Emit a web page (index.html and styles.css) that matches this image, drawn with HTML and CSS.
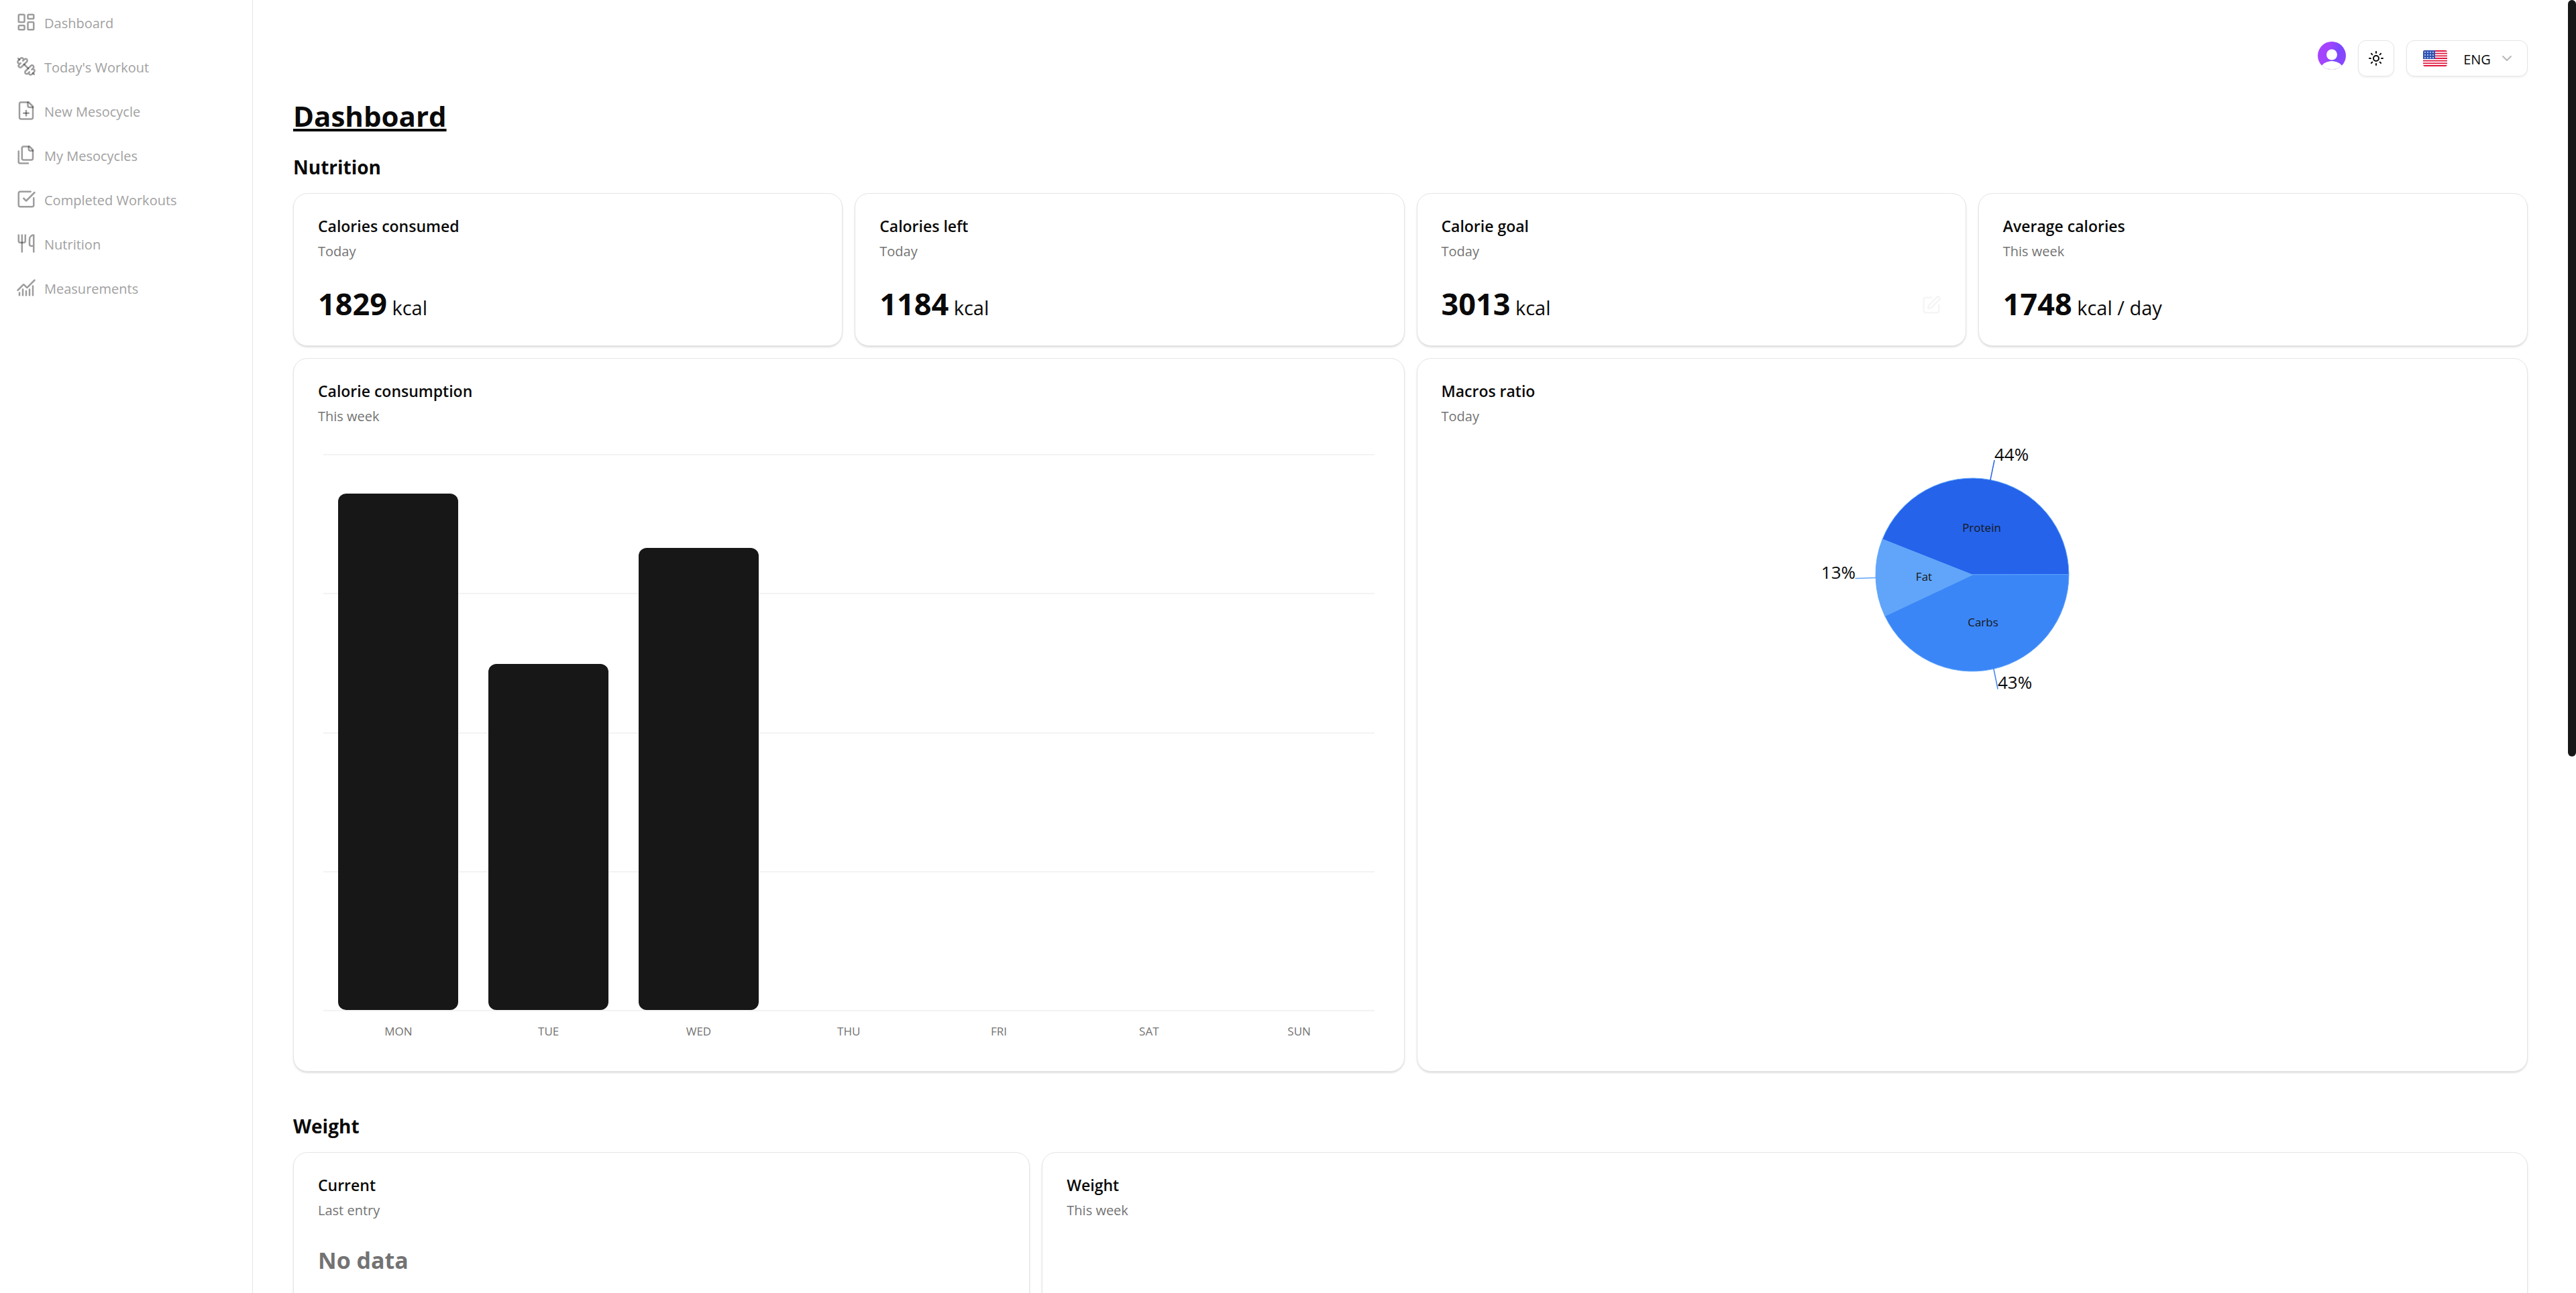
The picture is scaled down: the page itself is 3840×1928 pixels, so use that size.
FILE: index.html
```html
<!DOCTYPE html>
<html lang="en">
<head>
<meta charset="utf-8">
<meta name="viewport" content="width=device-width, initial-scale=1">
<title>Dashboard</title>
<link rel="stylesheet" href="styles.css">
</head>
<body>
<div class="app">
  <aside class="sidebar">
    <nav class="nav">
      <a class="nav-link" href="#dashboard"><svg class="icon" viewBox="0 0 24 24"><rect x="3" y="3" width="7" height="9" rx="1"/><rect x="14" y="3" width="7" height="5" rx="1"/><rect x="14" y="12" width="7" height="9" rx="1"/><rect x="3" y="16" width="7" height="5" rx="1"/></svg><span>Dashboard</span></a>
      <a class="nav-link" href="#today"><svg class="icon" viewBox="0 0 24 24"><path d="M14.4 14.4 9.6 9.6"/><path d="M18.657 21.485a2 2 0 1 1-2.829-2.828l-1.767 1.768a2 2 0 1 1-2.829-2.829l6.364-6.364a2 2 0 1 1 2.829 2.829l-1.768 1.767a2 2 0 1 1 2.828 2.829z"/><path d="m21.5 21.5-1.4-1.4"/><path d="M3.9 3.9 2.5 2.5"/><path d="M6.404 12.768a2 2 0 1 1-2.829-2.829l1.768-1.767a2 2 0 1 1-2.828-2.829l2.828-2.828a2 2 0 1 1 2.829 2.828l1.767-1.768a2 2 0 1 1 2.829 2.829z"/></svg><span>Today's Workout</span></a>
      <a class="nav-link" href="#new"><svg class="icon" viewBox="0 0 24 24"><path d="M15 2H6a2 2 0 0 0-2 2v16a2 2 0 0 0 2 2h12a2 2 0 0 0 2-2V7Z"/><path d="M14 2v4a2 2 0 0 0 2 2h4"/><path d="M9 15h6"/><path d="M12 18v-6"/></svg><span>New Mesocycle</span></a>
      <a class="nav-link" href="#mesocycles"><svg class="icon" viewBox="0 0 24 24"><path d="M20 7h-3a2 2 0 0 1-2-2V2"/><path d="M9 18a2 2 0 0 1-2-2V4a2 2 0 0 1 2-2h7l4 4v10a2 2 0 0 1-2 2Z"/><path d="M3 7.6v12.8A1.6 1.6 0 0 0 4.6 22h9.8"/></svg><span>My Mesocycles</span></a>
      <a class="nav-link" href="#completed"><svg class="icon" viewBox="0 0 24 24"><path d="M21 10.656V19a2 2 0 0 1-2 2H5a2 2 0 0 1-2-2V5a2 2 0 0 1 2-2h12.344"/><path d="m9 11 3 3L22 4"/></svg><span>Completed Workouts</span></a>
      <a class="nav-link" href="#nutrition"><svg class="icon" viewBox="0 0 24 24"><path d="M3 2v7c0 1.1.9 2 2 2h4a2 2 0 0 0 2-2V2"/><path d="M7 2v20"/><path d="M21 15V2a5 5 0 0 0-5 5v6c0 1.1.9 2 2 2h3Zm0 0v7"/></svg><span>Nutrition</span></a>
      <a class="nav-link" href="#measurements"><svg class="icon" viewBox="0 0 24 24"><path d="M12 16v5"/><path d="M16 14v7"/><path d="M20 10v11"/><path d="m22 3-8.646 8.646a.5.5 0 0 1-.708 0L9.354 8.354a.5.5 0 0 0-.707 0L2 15"/><path d="M4 18v3"/><path d="M8 14v7"/></svg><span>Measurements</span></a>
    </nav>
  </aside>

  <main class="main">
    <header class="topbar">
      <button class="avatar" type="button" aria-label="Account">
        <svg viewBox="0 0 42 42">
          <defs>
            <linearGradient id="avatar-fill" x1="0" y1="0" x2="1" y2="0.3"><stop offset="0.4" stop-color="#a544ff"/><stop offset="0.75" stop-color="#7a48ff"/><stop offset="1" stop-color="#8a46ff"/></linearGradient>
            <clipPath id="avatar-clip"><circle cx="21" cy="21" r="21"/></clipPath>
          </defs>
          <g clip-path="url(#avatar-clip)"><rect width="42" height="42" fill="url(#avatar-fill)"/><circle cx="21" cy="19.500" r="8" fill="#fff"/><circle cx="21" cy="49" r="20" fill="#fff"/></g>
          <path d="M14 40.500a21 21 0 0 0 14 0" fill="none" stroke="#e5e5e5"/>
        </svg>
      </button>
      <button class="theme" type="button" aria-label="Toggle theme">
        <svg viewBox="0 0 24 24"><circle cx="12" cy="12" r="4"/><path d="M12 2v2"/><path d="M12 20v2"/><path d="m4.930 4.930 1.410 1.410"/><path d="m17.660 17.660 1.410 1.410"/><path d="M2 12h2"/><path d="M20 12h2"/><path d="m6.340 17.660-1.410 1.410"/><path d="m19.070 4.930-1.410 1.410"/></svg>
      </button>
      <button class="language" type="button" aria-haspopup="listbox">
        <svg class="flag" viewBox="0 0 36 24">
          <defs>
            <clipPath id="flag-clip"><rect width="36" height="24" rx="3"/></clipPath>
            <pattern id="stars" width="4" height="4" patternUnits="userSpaceOnUse" x="1" y="1"><rect x="1" y="1" width="2" height="2" fill="#a9bbe6"/></pattern>
          </defs>
          <g clip-path="url(#flag-clip)">
            <rect width="36" height="24" fill="#fff"/>
            <path d="M0 1h36M0 4.670h36M0 8.340h36M0 12h36M0 15.670h36M0 19.340h36M0 23h36" stroke="#e0143c" stroke-width="1.850"/>
            <rect width="18" height="13" fill="#2e52b2"/><rect x="1" y="1" width="16" height="12" fill="url(#stars)"/>
          </g>
        </svg>
        <span class="language-name">ENG</span>
        <svg class="chevron" viewBox="0 0 24 24"><path d="m6 9 6 6 6-6"/></svg>
      </button>
    </header>

    <h1 class="page-title">Dashboard</h1>

    <section class="section">
      <h2 class="section-title">Nutrition</h2>
      <div class="grid grid-nutrition">
        <article class="card">
          <h3 class="card-title">Calories consumed</h3>
          <p class="card-sub">Today</p>
          <p class="metric"><strong>1829</strong> kcal</p>
        </article>
        <article class="card">
          <h3 class="card-title">Calories left</h3>
          <p class="card-sub">Today</p>
          <p class="metric"><strong>1184</strong> kcal</p>
        </article>
        <article class="card">
          <h3 class="card-title">Calorie goal</h3>
          <p class="card-sub">Today</p>
          <div class="metric-row">
            <p class="metric"><strong>3013</strong> kcal</p>
            <button class="edit" type="button" aria-label="Edit calorie goal"><svg viewBox="0 0 24 24"><path d="M12 3H5a2 2 0 0 0-2 2v14a2 2 0 0 0 2 2h14a2 2 0 0 0 2-2v-7"/><path d="M18.375 2.625a1 1 0 0 1 3 3l-9.013 9.014a2 2 0 0 1-.853.505l-2.873.84a.5.5 0 0 1-.62-.62l.84-2.873a2 2 0 0 1 .506-.852z"/></svg></button>
          </div>
        </article>
        <article class="card">
          <h3 class="card-title">Average calories</h3>
          <p class="card-sub">This week</p>
          <p class="metric"><strong>1748</strong> kcal / day</p>
        </article>

        <article class="card card-chart">
          <h3 class="card-title">Calorie consumption</h3>
          <p class="card-sub">This week</p>
          <div class="chart">
            <div class="plot">
              <div class="band"></div><div class="band"></div><div class="band"></div><div class="band"></div>
              <div class="bars">
                <div class="slot"><div class="bar" style="height: 92.900%"></div></div>
                <div class="slot"><div class="bar" style="height: 62.300%"></div></div>
                <div class="slot"><div class="bar" style="height: 83.100%"></div></div>
              </div>
            </div>
            <div class="days"><span>MON</span><span>TUE</span><span>WED</span><span>THU</span><span>FRI</span><span>SAT</span><span>SUN</span></div>
          </div>
        </article>

        <article class="card card-chart">
          <h3 class="card-title">Macros ratio</h3>
          <p class="card-sub">Today</p>
          <svg class="pie" viewBox="-250 -187 500 375" role="img" aria-label="Macros ratio">
            <path d="M0 0H144A144 144 0 0 0 -133.900 -53Z" fill="#2563eb" stroke="#60a5fa"/>
            <path d="M0 0L-130.300 61.300A144 144 0 0 0 144 0Z" fill="#3b86f7" stroke="#60a5fa"/>
            <path d="M0 0L-133.900 -53A144 144 0 0 0 -130.300 61.300Z" fill="#60a5fa" stroke="#60a5fa"/>
            <path d="M27 -141.500L33 -170.500" stroke="#2563eb" stroke-width="1.500"/>
            <path d="M-144 4.500L-174 5.500" stroke="#60a5fa" stroke-width="1.500"/>
            <path d="M32 140.500L38 170" stroke="#3b82f6" stroke-width="1.500"/>
            <text class="pie-value" x="33" y="-170">44%</text>
            <text class="pie-value" x="-174" y="6" text-anchor="end">13%</text>
            <text class="pie-value" x="38" y="170">43%</text>
            <text class="pie-name" x="14" y="-64">Protein</text>
            <text class="pie-name" x="-72" y="9">Fat</text>
            <text class="pie-name" x="16" y="77">Carbs</text>
          </svg>
        </article>
      </div>
    </section>

    <section class="section">
      <h2 class="section-title">Weight</h2>
      <div class="grid grid-weight">
        <article class="card">
          <h3 class="card-title">Current</h3>
          <p class="card-sub">Last entry</p>
          <p class="empty">No data</p>
        </article>
        <article class="card card-wide">
          <h3 class="card-title">Weight</h3>
          <p class="card-sub">This week</p>
        </article>
      </div>
    </section>
  </main>
  <div class="scroll-thumb"></div>
</div>
</body>
</html>
```

FILE: styles.css
```css
* { box-sizing: border-box; }

body {
  margin: 0;
  background: #fff;
  color: #0a0a0a;
  font-family: "Segoe UI", "Open Sans", "Noto Sans", sans-serif;
  font-size: 22px;
}

h1, h2, h3, p { margin: 0; }
button { font: inherit; color: inherit; cursor: pointer; }
svg { display: block; fill: none; stroke-linecap: round; stroke-linejoin: round; }

.app {
  position: relative;
  display: flex;
  height: 100vh;
  overflow: hidden;
}

.sidebar {
  flex: none;
  width: 377px;
  border-right: 1px solid #e5e5e5;
}

.nav { display: flex; flex-direction: column; }
.nav-link {
  display: flex;
  align-items: center;
  gap: 12px;
  height: 66px;
  padding: 0 24px;
  color: #a1a1a1;
  font-size: 20px;
  text-decoration: none;
}
.nav-link span { padding-top: 2px; }
.icon {
  width: 30px;
  height: 30px;
  stroke: rgba(10, 10, 10, 0.4);
  stroke-width: 2;
}

.main {
  flex: 1;
  min-width: 0;
  padding: 60px 72px 60px 60px;
}

.topbar {
  display: flex;
  justify-content: flex-end;
  gap: 18px;
  height: 80px;
}
.avatar {
  width: 42px;
  height: 42px;
  margin-top: 2px;
  padding: 0;
  border: 0;
  background: none;
}
.theme, .language {
  display: flex;
  align-items: center;
  justify-content: center;
  height: 54px;
  border: 1px solid #e5e5e5;
  border-radius: 12px;
  background: #fff;
  box-shadow: 0 2px 3px rgba(0, 0, 0, 0.05);
}
.theme { width: 54px; padding: 0; }
.theme svg { width: 24px; height: 24px; stroke: #0a0a0a; stroke-width: 2; }
.language { width: 181px; padding: 0 18px 0 24px; justify-content: space-between; }
.flag { width: 36px; height: 24px; }
.language-name { padding: 4px 0 0 12px; font-size: 20px; line-height: 28px; }
.chevron { width: 24px; height: 24px; stroke: #b8b8b8; stroke-width: 2; }

.page-title {
  font-size: 42px;
  line-height: 66px;
  text-decoration: underline;
  text-decoration-thickness: 4px;
  text-underline-offset: 3px;
  text-decoration-skip-ink: none;
}

.section { margin-bottom: 38px; }
.section-title {
  padding: 22px 0 18px;
  font-size: 28px;
  line-height: 42px;
}

.grid { display: grid; gap: 18px; }
.grid-nutrition { grid-template-columns: repeat(4, 1fr); }
.grid-weight { grid-template-columns: repeat(3, 1fr); }

.card {
  min-width: 0;
  padding: 36px 36px 32px;
  border: 1px solid #e5e5e5;
  border-radius: 21px;
  background: #fff;
  box-shadow: 0 2px 3px rgba(0, 0, 0, 0.1), 0 2px 3px -2px rgba(0, 0, 0, 0.1);
}
.card-chart { grid-column: span 2; min-height: 1064px; }
.card-wide { grid-column: span 2; }
.grid-weight .card { min-height: 480px; }

.card-title { font-size: 23px; font-weight: 600; line-height: 24px; }
.card-sub { margin-top: 11px; color: #737373; font-size: 20px; line-height: 30px; }

.metric { margin-top: 45px; font-size: 29px; line-height: 48px; }
.metric strong { font-size: 45px; line-height: 32px; }
.metric-row { display: flex; align-items: center; justify-content: space-between; }
.edit { margin-top: 36px; padding: 0; border: 0; background: none; }
.edit svg { width: 30px; height: 30px; stroke: #f5f5f5; stroke-width: 2; }
.empty { margin-top: 35px; color: #737373; font-size: 34px; font-weight: 700; line-height: 48px; }

.chart { padding: 41px 8px 0; }
.plot {
  position: relative;
  display: grid;
  grid-template-rows: repeat(4, 1fr);
  height: 831px;
  border-bottom: 2px solid #f3f3f3;
}
.band { border-top: 2px solid #f3f3f3; }
.bars {
  position: absolute;
  inset: 0;
  display: grid;
  grid-template-columns: repeat(7, 1fr);
}
.slot { display: flex; align-items: flex-end; justify-content: center; }
.bar { width: 80%; border-radius: 12px; background: #171717; }
.days {
  display: grid;
  grid-template-columns: repeat(7, 1fr);
  padding-top: 18px;
  color: #737373;
  font-size: 17px;
  line-height: 24px;
  text-align: center;
}

.pie { width: 500px; height: 375px; margin: 34px auto 0; overflow: visible; }
.pie text { fill: #0a0a0a; }
.pie-value { font-size: 26px; }
.pie .pie-name { font-size: 17px; text-anchor: middle; fill: #171717; }

.scroll-thumb {
  position: absolute;
  top: 0;
  right: 0;
  width: 12px;
  height: 1128px;
  border-radius: 6px;
  background: #171717;
}
```
